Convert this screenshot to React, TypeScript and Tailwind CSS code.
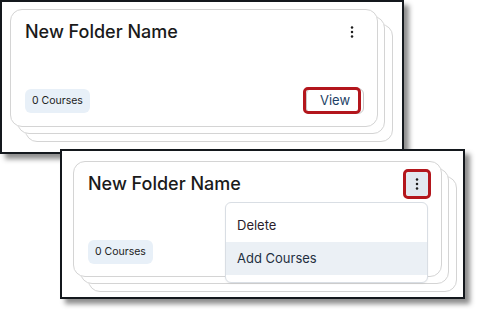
import { ReactNode } from 'react';

const FONT = { fontFamily: 'Inter, "Noto Sans", sans-serif' };

function Kebab() {
  return (
    <svg width="4" height="12" viewBox="0 0 4 12" className="text-[#1d1d1d]">
      <circle cx="2" cy="1.5" r="1.25" fill="currentColor" />
      <circle cx="2" cy="6" r="1.25" fill="currentColor" />
      <circle cx="2" cy="10.5" r="1.25" fill="currentColor" />
    </svg>
  );
}

// Stack of three folder cards; children goes into the front card
function FolderCard({ children, className }: { children: ReactNode; className?: string }) {
  return (
    <div className={'relative ' + (className ?? '')}>
      <div className="absolute left-[15px] top-[15px] w-full h-full rounded-[12px] border border-[#d4d4d4] bg-white" />
      <div className="absolute left-[7px] top-[7px] w-full h-full rounded-[12px] border border-[#d4d4d4] bg-white" />
      <div className="relative w-full h-full rounded-[12px] border border-[#d4d4d4] bg-white flex flex-col justify-between pl-[14px] pr-[13px] pt-[8px] pb-[12px]">
        {children}
      </div>
    </div>
  );
}

function Badge() {
  return (
    <span className="inline-flex items-center h-[24px] px-[7px] rounded-[6px] bg-[#e8f0f8] text-[10.5px] text-[#222]">
      0 Courses
    </span>
  );
}

export default function App() {
  return (
    <div className="w-[480px] h-[315px] bg-white overflow-hidden flex flex-col" style={FONT}>
      {/* First shot: folder card with View highlighted */}
      <div className="w-[404px] h-[154px] border-2 border-[#14181d] bg-white shadow-[5px_5px_5px_rgba(0,0,0,0.45)] pl-[8px] pt-[7px]">
        <FolderCard className="w-[368px] h-[118px]">
          <div className="flex items-center justify-between">
            <span className="text-[18px] font-[550] text-[#1a1a1a]">New Folder Name</span>
            <span className="w-[22px] h-[24px] flex items-center justify-center mr-[1px]">
              <Kebab />
            </span>
          </div>
          <div className="flex items-center justify-between">
            <Badge />
            <div className="relative">
              <button className="w-[58px] h-[26px] rounded-[6px] border border-[#c9c9c9] text-[13px] text-[#1d3f66] flex items-center justify-center">
                View
              </button>
              <div className="absolute left-[-3px] top-[-1px] w-[58px] h-[27px] rounded-[5px] border-[3px] border-[#b3161c]" />
            </div>
          </div>
        </FolderCard>
      </div>

      {/* Second shot: menu open */}
      <div className="relative z-10 ml-[60px] -mt-[5px] w-[405px] h-[150px] border-2 border-[#14181d] bg-white shadow-[5px_5px_5px_rgba(0,0,0,0.45)] pl-[11px] pt-[10px]">
        <FolderCard className="w-[369px] h-[116px]">
          <div className="flex items-center justify-between">
            <span className="text-[18px] font-[550] text-[#1a1a1a]">New Folder Name</span>
            <span className="relative w-[22px] h-[24px] rounded-[4px] bg-[#e2e8ef] flex items-center justify-center">
              <Kebab />
              <span className="absolute -left-[3px] -top-[3px] w-[28px] h-[30px] rounded-[5px] border-[3px] border-[#b3161c]" />
            </span>
          </div>
          <div className="flex items-center">
            <Badge />
          </div>
          <div className="absolute left-[151px] top-[40px] w-[203px] h-[81px] rounded-[6px] border border-[#d9dee4] bg-white py-[6px] shadow-[0_1px_2px_rgba(0,0,0,0.05)]">
            <div className="h-[33px] flex items-center px-[11px] text-[13px] text-[#2b1d2b]">Delete</div>
            <div className="h-[33px] flex items-center px-[11px] text-[13px] text-[#1f2f3f] bg-[#ebf0f5]">Add Courses</div>
          </div>
        </FolderCard>
      </div>
    </div>
  );
}
